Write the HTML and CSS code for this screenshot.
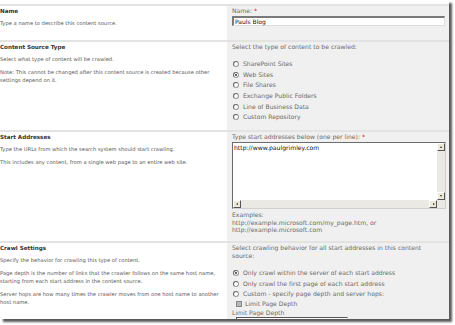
FILE: index.html
```html
<!DOCTYPE html>
<html>
<head>
<meta charset="utf-8">
<link rel="stylesheet" href="styles.css">
</head>
<body>
<div class="frame">
  <div class="gap"></div>
  <section class="row row-name">
    <div class="desc">
      <h3>Name</h3>
      <p>Type a name to describe this content source.</p>
    </div>
    <div class="ctrl">
      <div class="lbl">Name: <span class="req">*</span></div>
      <div class="input">Pauls Blog</div>
    </div>
  </section>
  <section class="row row-type">
    <div class="desc">
      <h3>Content Source Type</h3>
      <p>Select what type of content will be crawled.</p>
      <p>Note: This cannot be changed after this content source is created because other settings depend on it.</p>
    </div>
    <div class="ctrl">
      <div class="lbl">Select the type of content to be crawled:</div>
      <ul class="radios">
        <li><span class="radio"></span>SharePoint Sites</li>
        <li><span class="radio on"></span>Web Sites</li>
        <li><span class="radio"></span>File Shares</li>
        <li><span class="radio"></span>Exchange Public Folders</li>
        <li><span class="radio"></span>Line of Business Data</li>
        <li><span class="radio"></span>Custom Repository</li>
      </ul>
    </div>
  </section>
  <section class="row row-start">
    <div class="desc">
      <h3>Start Addresses</h3>
      <p>Type the URLs from which the search system should start crawling.</p>
      <p>This includes any content, from a single web page to an entire web site.</p>
    </div>
    <div class="ctrl">
      <div class="lbl">Type start addresses below (one per line): <span class="req">*</span></div>
      <div class="textarea">
        <div class="ta-text">http://www.paulgrimley.com</div>
        <div class="vscroll">
          <span class="sbtn up"></span>
          <span class="sbtn down"></span>
        </div>
        <div class="hscroll">
          <span class="sbtn left"></span>
          <span class="sbtn right"></span>
        </div>
        <div class="corner"></div>
      </div>
      <div class="examples">Examples:<br>http://example.microsoft.com/my_page.htm, or<br>http://example.microsoft.com</div>
    </div>
  </section>
  <section class="row row-crawl">
    <div class="desc">
      <h3>Crawl Settings</h3>
      <p>Specify the behavior for crawling this type of content.</p>
      <p>Page depth is the number of links that the crawler follows on the same host name, starting from each start address in the content source.</p>
      <p>Server hops are how many times the crawler moves from one host name to another host name.</p>
    </div>
    <div class="ctrl">
      <div class="lbl two">Select crawling behavior for all start addresses in this content source:</div>
      <ul class="radios">
        <li><span class="radio on"></span>Only crawl within the server of each start address</li>
        <li><span class="radio"></span>Only crawl the first page of each start address</li>
        <li><span class="radio"></span>Custom - specify page depth and server hops:</li>
      </ul>
      <div class="check"><span class="box"></span>Limit Page Depth</div>
      <div class="lbl small">Limit Page Depth</div>
      <div class="input short"></div>
    </div>
  </section>
</div>
</body>
</html>
```
FILE: styles.css
```css
html, body {
  margin: 0;
  padding: 0;
  background: #ffffff;
}
body {
  width: 455px;
  height: 325px;
  overflow: hidden;
}
.frame {
  width: 449px;
  height: 319px;
  overflow: hidden;
  background: #ffffff;
  box-shadow: 3px 3px 2px rgba(0, 0, 0, 0.65);
  display: flex;
  flex-direction: column;
}
.gap {
  height: 4px;
  flex: none;
}
.row {
  display: grid;
  grid-template-columns: 227px 1fr;
  border-top: 2px solid #e3e3e3;
  flex: none;
}
.row-name { height: 34px; }
.row-type { height: 88px; }
.row-start { height: 109px; }
.row-crawl { height: 121px; }

.desc {
  font-family: Tahoma, "DejaVu Sans", sans-serif;
  font-size: 5.2px;
  line-height: 8px;
  color: #5a5a5a;
  padding: 1px 4px 0 0;
}
.desc h3 {
  margin: 0 0 4px 0;
  font-size: 5.6px;
  font-weight: bold;
  color: #333;
  line-height: 8px;
}
.desc p {
  margin: 0 0 5px 0;
}
.ctrl {
  background: #f0f0f0;
  padding: 1px 2px 0 5px;
  font-family: "DejaVu Sans", Verdana, sans-serif;
  font-size: 6.1px;
  line-height: 8px;
  color: #6a6a6a;
}
.lbl { margin-bottom: 0; }
.lbl.two { margin-bottom: 8px; width: 200px; }
.req { color: #d02020; }
.input {
  height: 7px;
  margin-top: 1px;
  width: 209px;
  background: #fff;
  border-top: 2px solid #7a7a7a;
  border-left: 2px solid #7a7a7a;
  border-right: 1px solid #ddd;
  border-bottom: 1px solid #ddd;
  color: #111;
  font-size: 6px;
  line-height: 7px;
  padding-left: 1px;
}
.input.short {
  width: 109px;
  margin-left: 4px;
  margin-top: 1px;
  height: 8px;
  border-top: 1px solid #555;
  border-left: 1px solid #555;
}
.radios {
  list-style: none;
  margin: 8px 0 0 0;
  padding: 0;
}
.row-crawl .radios { margin-top: 0; }
.radios li {
  height: 10.6px;
  display: flex;
  align-items: center;
  gap: 4px;
  padding-left: 1px;
}
.radio {
  width: 4px;
  height: 4px;
  border: 1px solid #9a9a9a;
  border-top-color: #666;
  border-left-color: #666;
  border-radius: 50%;
  background: #fff;
  position: relative;
  flex: none;
}
.radio.on::after {
  content: "";
  position: absolute;
  left: 1px;
  top: 1px;
  width: 2px;
  height: 2px;
  border-radius: 50%;
  background: #333;
}
.check {
  display: flex;
  align-items: center;
  gap: 3px;
  height: 9px;
  padding-left: 4px;
}
.box {
  width: 4px;
  height: 4px;
  border: 1px solid #888;
  background: #b8b8b8;
}
.lbl.small { line-height: 7px; }

.textarea {
  margin-top: 1px;
  width: 214px;
  height: 67px;
  display: grid;
  grid-template-columns: 1fr 8px;
  grid-template-rows: 1fr 8px;
  background: #fff;
  border-top: 1px solid #6c6c6c;
  border-left: 1px solid #6c6c6c;
  border-right: 1px solid #cfcfcf;
  border-bottom: 1px solid #cfcfcf;
  box-sizing: border-box;
}
.ta-text {
  color: #111;
  padding: 1px 1px;
  line-height: 7px;
}
.vscroll {
  background: #ebe9e4;
  display: flex;
  flex-direction: column;
  justify-content: space-between;
}
.hscroll {
  background: #ebe9e4;
  display: flex;
  justify-content: space-between;
}
.corner { background: #ebe9e4; }
.sbtn {
  width: 8px;
  height: 8px;
  box-sizing: border-box;
  background: #ece9d8;
  border-top: 1px solid #fff;
  border-left: 1px solid #fff;
  border-right: 1px solid #555;
  border-bottom: 1px solid #555;
  position: relative;
}
.sbtn::after {
  content: "";
  position: absolute;
  left: 2px;
  top: 2px;
  width: 0;
  height: 0;
}
.sbtn.up::after {
  top: 2px; left: 1.5px;
  border-left: 1.5px solid transparent;
  border-right: 1.5px solid transparent;
  border-bottom: 2px solid #333;
}
.sbtn.down::after {
  top: 2px; left: 1.5px;
  border-left: 1.5px solid transparent;
  border-right: 1.5px solid transparent;
  border-top: 2px solid #333;
}
.sbtn.left::after {
  top: 1.5px; left: 2px;
  border-top: 1.5px solid transparent;
  border-bottom: 1.5px solid transparent;
  border-right: 2px solid #333;
}
.sbtn.right::after {
  top: 1.5px; left: 2.5px;
  border-top: 1.5px solid transparent;
  border-bottom: 1.5px solid transparent;
  border-left: 2px solid #333;
}
.examples {
  margin-top: 2px;
  line-height: 7.5px;
}
```
